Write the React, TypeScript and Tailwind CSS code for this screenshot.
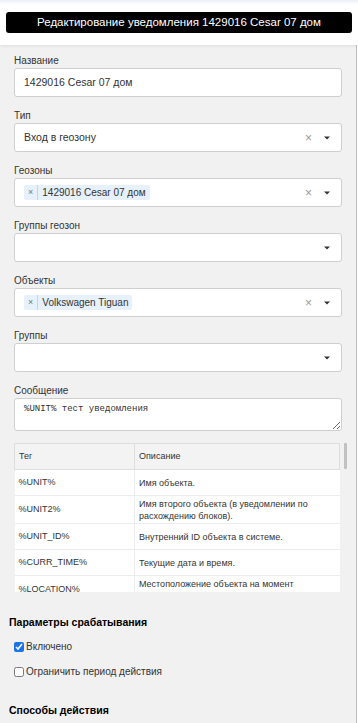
import React from 'react';

const font = { fontFamily: '"Liberation Sans", Arial, sans-serif' };

const Caret = () => (
  <svg width="6" height="4" viewBox="0 0 6 4" className="shrink-0">
    <path d="M0 0.5h6L3 3.5z" fill="#333" />
  </svg>
);

const Clear = () => (
  <span className="text-[12px] leading-none text-[#999] mr-[12px]">×</span>
);

const Tag: React.FC<{ label: string }> = ({ label }) => (
  <span className="flex items-center h-[15px] bg-[#e6f1fc] rounded-[2px] text-[10px] text-[#333]">
    <span className="px-[4px] text-[9px] text-[#777] border-r border-[#bcd7f2] h-full flex items-center">×</span>
    <span className="px-[4px]">{label}</span>
  </span>
);

const Field: React.FC<{ label: string; children: React.ReactNode }> = ({ label, children }) => (
  <div className="flex flex-col">
    <label className="text-[10px] text-[#333] leading-[12px] mb-[1px]">{label}</label>
    {children}
  </div>
);

const Select: React.FC<{ children?: React.ReactNode; clear?: boolean }> = ({ children, clear }) => (
  <div className="h-[29px] bg-white border border-[#cfcfcf] rounded-[3px] flex items-center pl-[9px] pr-[11px]">
    <div className="flex-1 flex items-center text-[10.5px] text-[#333]">{children}</div>
    {clear && <Clear />}
    <Caret />
  </div>
);

const rows: [string, string, string][] = [
  ['%UNIT%', 'Имя объекта.', 'h-[26px]'],
  ['%UNIT2%', 'Имя второго объекта (в уведомлении по расхождению блоков).', 'h-[28px]'],
  ['%UNIT_ID%', 'Внутренний ID объекта в системе.', 'h-[26px]'],
  ['%CURR_TIME%', 'Текущие дата и время.', 'h-[26px]'],
  ['%LOCATION%', 'Местоположение объекта на момент срабатывания.', 'h-[28px]'],
];

export default function App() {
  return (
    <div className="w-[358px] h-[723px] overflow-hidden bg-white" style={font}>
      <div className="h-[45px] bg-gradient-to-b from-[#eaeef8] via-white via-[10%] to-white flex items-center px-[6px] shadow-[0_1px_3px_rgba(0,0,0,0.08)] relative z-10">
        <div className="w-full h-[21px] bg-black rounded-[3px] flex items-center justify-center text-white text-[11.5px]">
          Редактирование уведомления 1429016 Cesar 07 дом
        </div>
      </div>
      <div className="w-[357px] h-[678px] bg-[#f1f1f1] border-r border-[#bdbdbd] pt-[10px]">
        <div className="flex flex-col gap-[13px] pl-[14px] pr-[14px]">
          <Field label="Название">
            <div className="h-[29px] bg-white border border-[#cfcfcf] rounded-[3px] flex items-center pl-[9px] text-[10.5px] text-[#333]">
              1429016 Cesar 07 дом
            </div>
          </Field>
          <Field label="Тип">
            <Select clear>Вход в геозону</Select>
          </Field>
          <Field label="Геозоны">
            <Select clear>
              <Tag label="1429016 Cesar 07 дом" />
            </Select>
          </Field>
          <Field label="Группы геозон">
            <Select />
          </Field>
          <Field label="Объекты">
            <Select clear>
              <Tag label="Volkswagen Tiguan" />
            </Select>
          </Field>
          <Field label="Группы">
            <Select />
          </Field>
          <Field label="Сообщение">
            <textarea
              defaultValue="%UNIT% тест уведомления"
              className="h-[33px] bg-white border border-[#cfcfcf] rounded-[3px] px-[9px] py-[4px] text-[9px] text-[#333] outline-none"
              style={{ fontFamily: '"Liberation Mono", monospace' }}
            />
          </Field>
        </div>
        <div className="mt-[12px] ml-[14px] mr-[8px] h-[149px] overflow-hidden flex">
          <table className="w-[327px] h-fit border-collapse text-[9px] text-[#333] table-fixed">
            <colgroup>
              <col className="w-[120px]" />
              <col />
            </colgroup>
            <thead>
              <tr className="h-[26px] bg-[#f3f3f3]">
                <th className="text-left font-normal pl-[4px] border border-[#dedede]">Тег</th>
                <th className="text-left font-normal pl-[4px] border border-[#dedede]">Описание</th>
              </tr>
            </thead>
            <tbody className="bg-white">
              {rows.map(([tag, desc, h]) => (
                <tr key={tag} className={`${h} border-b border-[#ececec]`}>
                  <td className="pl-[4px] align-middle border-r border-[#ececec]">{tag}</td>
                  <td className="pl-[4px] pr-[4px] leading-[12px] align-middle">{desc}</td>
                </tr>
              ))}
            </tbody>
          </table>
          <div className="ml-[4px] w-[4px] shrink-0">
            <div className="w-[3px] h-[26px] bg-[#c1c1c1] rounded-[1px]" />
          </div>
        </div>
        <div className="pl-[9px] mt-[23px] text-[10.5px] leading-[14px] font-bold text-black">Параметры срабатывания</div>
        <div className="pl-[14px] mt-[11px] flex flex-col gap-[11px] text-[10px] leading-[14px] text-[#333]">
          <label className="flex items-center gap-[2px]">
            <input type="checkbox" defaultChecked className="w-[10px] h-[10px] m-0 accent-[#1a73e8]" />
            Включено
          </label>
          <label className="flex items-center gap-[2px]">
            <input type="checkbox" className="w-[10px] h-[10px] m-0" />
            Ограничить период действия
          </label>
        </div>
        <div className="pl-[9px] mt-[24px] text-[10.5px] leading-[14px] font-bold text-black">Способы действия</div>
      </div>
    </div>
  );
}
